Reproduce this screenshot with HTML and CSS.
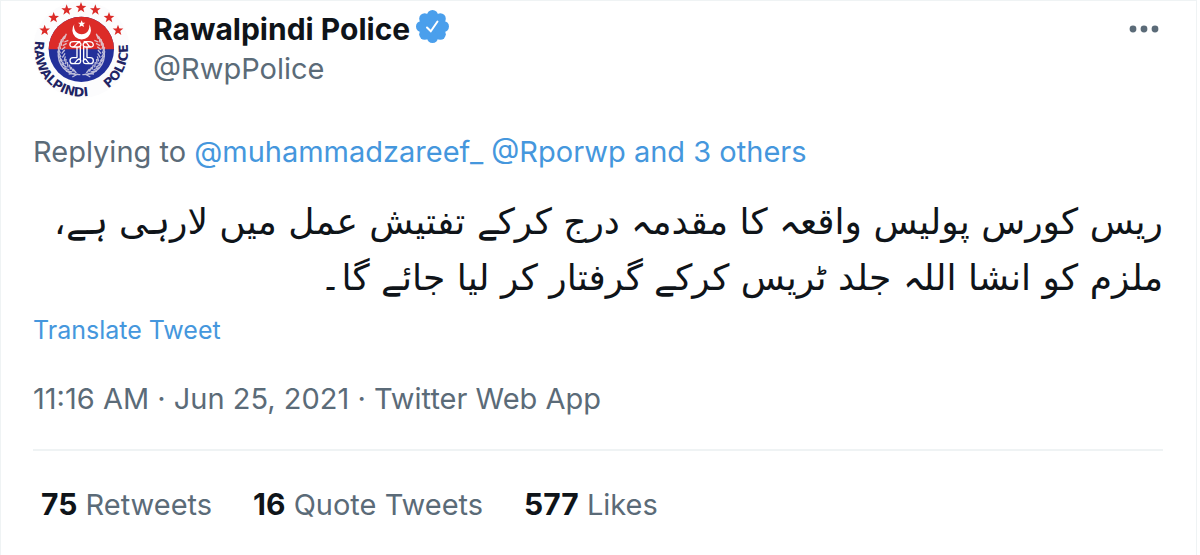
FILE: index.html
```
<!DOCTYPE html>
<html lang="en">
<head>
    <meta charset="UTF-8">
    <meta name="viewport" content="width=device-width, initial-scale=1.0">
    <title>Rawalpindi Police on Twitter</title>
    <link rel="stylesheet" href="styles.css">
</head>
<body>

    <article class="tweet">
        <header class="tweet-header">
            <a class="avatar" href="#" aria-label="Rawalpindi Police">
                <svg viewBox="0 0 291 291">
                    <defs>
                        <path id="ring" d="M8 118 A140 140 0 1 0 282 118"/>
                        <path id="star" d="M0 -17 L4.2 -5.4 L16 -5.2 L6.6 2.2 L10 14 L0 7 L-10 14 L-6.6 2.2 L-16 -5.2 L-4.2 -5.4 Z"/>
                        <g id="laurel">
                            <path d="M142 221 C100 222 72 192 76 150 C78 130 86 114 98 103"/>
                            <path d="M134 219 l-16 9 M126 217 l-19 2 M117 213 l-18 -3 M109 207 l-17 -7 M101 199 l-16 -11 M94 190 l-14 -14 M88 180 l-12 -16 M84 168 l-10 -17 M82 157 l-7 -18 M83 145 l-4 -18 M85 134 l0 -19 M89 124 l3 -17 M94 114 l6 -16"/>
                            <path d="M130 216 l-10 -12 M121 212 l-7 -14 M113 206 l-4 -15 M105 199 l-2 -16 M98 190 l1 -16 M93 181 l4 -15 M88 170 l8 -13 M86 158 l9 -11 M86 146 l11 -9 M89 134 l12 -7 M94 123 l12 -5"/>
                        </g>
                    </defs>
                    <circle class="seal-paper" cx="145" cy="146" r="145"/>
                    <circle class="seal-blue" cx="145" cy="145" r="98"/>
                    <path class="seal-red" d="M47 145 A98 98 0 0 1 243 145 Z"/>
                    <g class="seal-red">
                        <use href="#star" x="35" y="88"/>
                        <use href="#star" x="62" y="50"/>
                        <use href="#star" x="101" y="27"/>
                        <use href="#star" x="144" y="20"/>
                        <use href="#star" x="187" y="27"/>
                        <use href="#star" x="228" y="50"/>
                        <use href="#star" x="255" y="88"/>
                    </g>
                    <path class="seal-white" d="M124 70 A28 28 0 1 0 168 70 A23 23 0 1 1 124 70 Z"/>
                    <path class="seal-white" d="M146 58 l3 7 8 0 -6 5 2 8 -7 -4 -7 4 2 -8 -6 -5 8 0 Z"/>
                    <g class="seal-laurel">
                        <use href="#laurel"/>
                        <use href="#laurel" transform="matrix(-1 0 0 1 290 0)"/>
                    </g>
                    <g class="seal-knot">
                        <path d="M142 122 H120 C108 122 108 138 118 138 C128 138 128 126 138 124 C146 124 146 138 136 138 H118"/>
                        <path d="M152 122 H168 C184 122 184 138 174 138 C164 138 166 126 158 124 C148 124 148 138 158 138 H174"/>
                        <path d="M132 138 V170 M142 138 V176 M152 138 V176 M162 138 V170"/>
                        <path d="M132 170 H120 C108 170 108 188 120 188 C130 188 128 176 138 174 C146 176 144 188 134 188 H120"/>
                        <path d="M162 170 H172 C184 170 184 188 172 188 C162 188 164 176 156 174 C148 176 150 188 158 188 H172"/>
                    </g>
                    <text class="seal-text"><textPath href="#ring" startOffset="1">RAWALPINDI</textPath></text>
                    <text class="seal-text"><textPath href="#ring" startOffset="334">POLICE</textPath></text>
                </svg>
            </a>
            <div class="author">
                <div class="name-row">
                    <a class="name" href="#">Rawalpindi Police</a>
                    <svg class="verified" viewBox="0 0 33 33" role="img" aria-label="Verified account">
                        <g class="badge">
                            <circle cx="16.5" cy="16.5" r="13"/>
                            <circle cx="16.5" cy="5.5" r="5.5"/>
                            <circle cx="24.3" cy="8.7" r="5.5"/>
                            <circle cx="27.5" cy="16.5" r="5.5"/>
                            <circle cx="24.3" cy="24.3" r="5.5"/>
                            <circle cx="16.5" cy="27.5" r="5.5"/>
                            <circle cx="8.7" cy="24.3" r="5.5"/>
                            <circle cx="5.5" cy="16.5" r="5.5"/>
                            <circle cx="8.7" cy="8.7" r="5.5"/>
                        </g>
                        <path class="check" d="M11 17.5 L14.8 21.3 L21.5 11.5"/>
                    </svg>
                </div>
                <a class="handle" href="#">@RwpPolice</a>
            </div>
            <button class="more" type="button" aria-label="More">
                <svg viewBox="0 0 30 8">
                    <circle cx="4" cy="4" r="3.4"/>
                    <circle cx="15" cy="4" r="3.4"/>
                    <circle cx="26" cy="4" r="3.4"/>
                </svg>
            </button>
        </header>

        <p class="reply">Replying to <a href="#">@muhammadzareef_</a> <a href="#">@Rporwp</a> <a href="#">and 3 others</a></p>

        <p class="tweet-text" lang="ur" dir="rtl">ریس کورس پولیس واقعہ کا مقدمہ درج کرکے تفتیش عمل میں لارہی ہے، ملزم کو انشا اللہ جلد ٹریس کرکے گرفتار کر لیا جائے گا۔</p>

        <a class="translate" href="#">Translate Tweet</a>

        <p class="meta"><a href="#">11:16 AM · Jun 25, 2021</a> · <a href="#">Twitter Web App</a></p>

        <div class="stats">
            <a href="#"><strong>75</strong> Retweets</a>
            <a href="#"><strong>16</strong> Quote Tweets</a>
            <a href="#"><strong>577</strong> Likes</a>
        </div>
    </article>

</body>
</html>
```
FILE: styles.css
```
* {
    box-sizing: border-box;
}
body {
    margin: 0;
    font-family: Inter, "Liberation Sans", sans-serif;
    font-size: 29px;
    line-height: 40px;
    color: #5b6b78;
    background-color: #fff;
}
a {
    color: inherit;
    text-decoration: none;
}
p {
    margin: 0;
}
.tweet {
    min-height: 100vh;
    margin-right: 3px;
    padding: 0 33px 0 32px;
    border: 1px solid #eff3f4;
    border-bottom: 0;
}
.tweet-header {
    display: flex;
    align-items: flex-start;
}
.avatar {
    width: 97px;
    height: 97px;
    margin-right: 23px;
}
.avatar svg {
    display: block;
    overflow: visible;
}
.seal-paper {
    fill: #fcfcfd;
}
.seal-blue {
    fill: #23309a;
}
.seal-red {
    fill: #dc2b28;
}
.seal-white {
    fill: #fff;
}
.seal-laurel {
    fill: none;
    stroke: #e3dfea;
    stroke-width: 4;
    opacity: 0.8;
}
.seal-knot {
    fill: none;
    stroke: #fff;
    stroke-width: 4;
}
.seal-text {
    font-family: "DejaVu Sans", sans-serif;
    font-size: 38px;
    font-weight: 700;
    fill: #1f2464;
}
.author {
    flex: 1;
    padding-top: 8px;
}
.name-row {
    display: flex;
    align-items: center;
    gap: 6px;
}
.name {
    font-size: 30px;
    font-weight: 700;
    color: #0f1419;
}
.verified {
    width: 33px;
    height: 33px;
    margin-bottom: 6px;
}
.badge {
    fill: #4a9fec;
}
.check {
    fill: none;
    stroke: #fff;
    stroke-width: 2;
    stroke-linecap: round;
}
.more {
    display: flex;
    margin-top: 20px;
    padding: 4px;
    border: 0;
    background: none;
    cursor: pointer;
}
.more svg {
    width: 30px;
    height: 8px;
    fill: #5b6b78;
}
.reply {
    margin-top: 34px;
}
.reply a,
.translate {
    color: #4597dd;
}
.tweet-text {
    margin-top: 22px;
    font-family: "DejaVu Sans", sans-serif;
    font-size: 36px;
    line-height: 56px;
    color: #0f1419;
}
.translate {
    display: block;
    margin-top: 4px;
    font-size: 25px;
}
.meta {
    margin-top: 29px;
    padding-bottom: 30px;
    border-bottom: 2px solid #eff3f4;
}
.stats {
    display: flex;
    gap: 41px;
    padding: 33px 8px;
}
.stats strong {
    font-size: 30px;
    font-weight: 700;
    color: #0f1419;
}
```
